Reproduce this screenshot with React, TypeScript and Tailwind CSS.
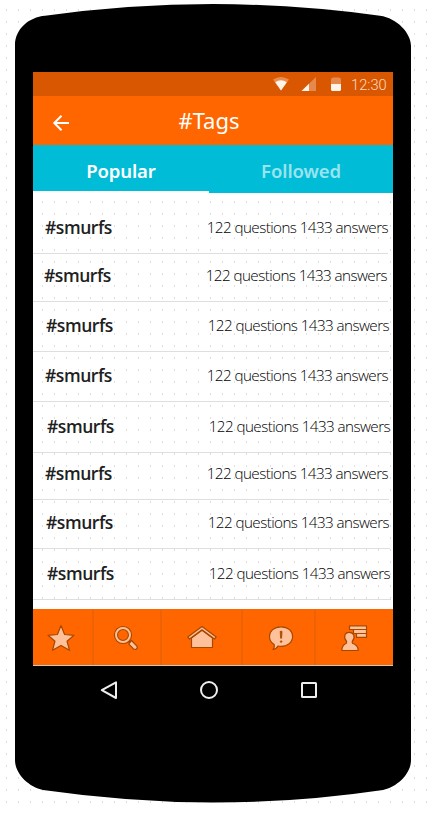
import React from "react";

const rows = [
  { box: "h-[61px] pt-[23px]", left: "pl-[12px]", right: "pr-[5px]", rule: "w-[355px]" },
  { box: "h-[48px] pt-[10px]", left: "pl-[11px]", right: "pr-[6px]", rule: "w-[355px]" },
  { box: "h-[50px] pt-[12px]", left: "pl-[13px]", right: "pr-[4px]", rule: "w-[356px]" },
  { box: "h-[50px] pt-[12px]", left: "pl-[12px]", right: "pr-[5px]", rule: "w-[356px]" },
  { box: "h-[51px] pt-[13px]", left: "pl-[14px]", right: "pr-[3px]", rule: "w-[358px]" },
  { box: "h-[47px] pt-[9px]", left: "pl-[12px]", right: "pr-[5px]", rule: "w-[356px]" },
  { box: "h-[49px] pt-[11px]", left: "pl-[13px]", right: "pr-[4px]", rule: "w-[357px]" },
  { box: "h-[51px] pt-[13px]", left: "pl-[14px]", right: "pr-[3px]", rule: "w-[358px]" },
];

function DotGrid() {
  return (
    <svg className="absolute left-0 top-0" width="430" height="813">
      <defs>
        <pattern id="dots" width="12" height="12" patternUnits="userSpaceOnUse">
          <rect x="6" y="9" width="1" height="2" fill="#e0e0e0" />
        </pattern>
      </defs>
      <rect width="430" height="813" fill="url(#dots)" />
    </svg>
  );
}

function PhoneBody() {
  return (
    <svg className="absolute left-0 top-0" width="430" height="813" viewBox="0 0 430 813">
      <path
        d="M15 45C15 29 29 17 45 15.7Q130 4 213 4Q296 4.3 380 15.7C397 18 411 33 411 46V760C411 774 397 787 383 790Q298 802.6 213 802.6Q128 802.2 43 790C29 787 15 774 15 760Z"
        fill="#000"
      />
    </svg>
  );
}

function StatusBar() {
  return (
    <div className="flex h-6 items-center justify-end bg-[#d95700] pr-[6px]">
      <svg width="85" height="24" viewBox="266 72 85 24">
        <path d="M273 79.6Q281 74.2 289 79.6L281 90.6Z" fill="#e98e50" />
        <path d="M275.2 82.2Q281 78.4 286.8 82.2L281 90.6Z" fill="#fff3ea" />
        <path d="M301.5 91L316 77V91Z" fill="#e6894c" />
        <path d="M301.5 91L309 83.8V91Z" fill="#fff3ea" />
        <path d="M331 79.5Q331 78 333 77.5H339Q341 78 341 79.5V84H331Z" fill="#e6894c" />
        <path d="M331 84H341V90L340 91H332L331 90Z" fill="#fff3ea" />
      </svg>
      <span className="mt-[2px] w-[36px] whitespace-nowrap font-['Roboto',sans-serif] text-[14.7px] font-light leading-none text-[#ffdcc2]">
        12:30
      </span>
    </div>
  );
}

function TitleBar() {
  return (
    <div className="grid h-[49px] grid-cols-[60px_1fr_60px] items-center bg-[#ff6600]">
      <svg className="ml-[18px] mt-[4px]" width="22" height="20" viewBox="51 113 22 20" fill="none" stroke="white" strokeWidth="2">
        <path d="M69 123H54.5M61.5 115.8L54.3 123L61.5 130.2" />
      </svg>
      <h1 className="-ml-[8px] pb-px text-center text-[22px] leading-[28px] text-white">#Tags</h1>
    </div>
  );
}

function Tabs() {
  return (
    <div className="flex h-[48px] bg-[#00bcd7] text-[18.5px] font-semibold leading-[26px] tracking-[-0.1px]">
      <div className="w-[176px] border-b-2 border-white pt-[13px] text-center text-white">Popular</div>
      <div className="flex-1 pt-[13px] text-center text-[#9ae4ef]">Followed</div>
    </div>
  );
}

function TagList() {
  return (
    <div className="h-[416px]">
      {rows.map((row, i) => (
        <div key={i} className={`flex flex-col justify-between ${row.box}`}>
          <div className={`flex h-[22px] items-center justify-between whitespace-nowrap text-[#202020] ${row.left} ${row.right}`}>
            <span className="text-[17.5px] font-semibold tracking-[-0.45px]">#smurfs</span>
            <span className="text-[15.2px] font-light tracking-[-0.56px] text-black">122 questions 1433 answers</span>
          </div>
          <div className={`h-px bg-[#dedede] ${row.rule}`} />
        </div>
      ))}
    </div>
  );
}

function StarIcon() {
  return <path d="M61 625.5L64.6 634.5L74 635.3L67 641.2L69.5 650.3L61 645.4L52.5 650.3L55 641.2L48 635.3L57.4 634.5Z" />;
}

function SearchIcon() {
  return (
    <>
      <path d="M129.5 642.5L131.5 640.5L136.7 645.8Q138 648 136.4 649.2Q134.7 649.9 133.3 648.6L129 644.3Z" />
      <circle cx="123" cy="635" r="7" fill="none" stroke="#a74700" strokeWidth="4.2" />
      <path d="M127.5 639.5L130.5 642.5" stroke="#a74700" strokeWidth="3" />
      <circle cx="123" cy="635" r="7" fill="none" stroke="#ffc199" strokeWidth="2" />
    </>
  );
}

function HomeIcon() {
  return (
    <>
      <path d="M191.5 638L202 630.2L212.5 638V647.5H191.5Z" />
      <path d="M187.8 637L202 626.5L216.2 637L214.5 639L202 629.8L189.5 639Z" />
    </>
  );
}

function AlertIcon() {
  return (
    <>
      <path d="M281 626.8C288.2 626.8 292.6 631.2 292.6 636.6C292.6 642.2 287.6 646.4 281 646.4Q279.5 646.4 278 646Q276.5 649 273 649.5Q275 646.8 274.2 644.5C271 642.8 269.5 640 269.5 636.6C269.5 631.2 274 626.8 281 626.8Z" />
      <path d="M280.2 631.3H282L281.6 638.2H280.6Z" fill="#a74700" stroke="#a74700" strokeWidth="0.8" />
      <circle cx="281.1" cy="641.6" r="0.8" fill="#a74700" strokeWidth="0.8" />
    </>
  );
}

function ProfileIcon() {
  return (
    <>
      <path d="M349.5 625.8H366.5V629.5H349.5ZM353.5 629.5H366.5V633.5H353.5ZM356.5 633.5H366.5V637.4H356.5Z" />
      <path d="M346.6 641.3C343 637.5 344.6 632.4 349.3 632.4C354 632.4 355.8 637.5 352.2 641.3L352.4 643.3Q358 645 358.2 650.5H341.8Q342 645 346.4 643.3Z" />
    </>
  );
}

const navItems = [
  { icon: <StarIcon />, view: "33 610 59 55", size: 59, divider: true },
  { icon: <SearchIcon />, view: "94 610 66 55", size: 66, divider: true },
  { icon: <HomeIcon />, view: "162 610 79 55", size: 79, divider: true },
  { icon: <AlertIcon />, view: "243 610 71 55", size: 71, divider: true },
  { icon: <ProfileIcon />, view: "316 610 77 55", size: 77, divider: false },
];

function BottomNav() {
  return (
    <nav className="flex h-[57px] border-b border-[#c9c9b9] bg-[#ff6600] pt-px">
      {navItems.map((item) => (
        <div key={item.view} className={`flex ${item.divider ? "border-r-2 border-[#ed6205]" : ""}`}>
          <svg width={item.size} height="55" viewBox={item.view} fill="#ffc199" stroke="#a74700" strokeWidth="1.2" strokeLinejoin="round">
            {item.icon}
          </svg>
        </div>
      ))}
    </nav>
  );
}

function SystemKeys() {
  return (
    <div className="flex h-[48px] items-center bg-black pl-[56px]">
      <svg width="240" height="40" viewBox="89 670 240 40" fill="none" stroke="#eeeeee" strokeWidth="2" strokeLinejoin="round">
        <path d="M116 682.3V698L101.8 690.2Z" />
        <circle cx="209" cy="690" r="8" />
        <rect x="302" y="683" width="14" height="14" rx="0.5" />
      </svg>
    </div>
  );
}

export default function App() {
  return (
    <div className="relative h-[813px] w-[430px] overflow-hidden bg-white font-['Noto_Sans',sans-serif]">
      <DotGrid />
      <PhoneBody />
      <main className="relative ml-[33px] w-[360px] pt-[72px]">
        <StatusBar />
        <TitleBar />
        <Tabs />
        <div className="relative overflow-hidden bg-white">
          <svg className="absolute left-0 top-0" width="360" height="416" viewBox="33 193 360 416">
            <rect x="33" y="193" width="360" height="416" fill="url(#dots)" />
          </svg>
          <div className="relative font-['Open_Sans','Noto_Sans',sans-serif]">
            <TagList />
          </div>
        </div>
        <BottomNav />
        <SystemKeys />
      </main>
    </div>
  );
}
